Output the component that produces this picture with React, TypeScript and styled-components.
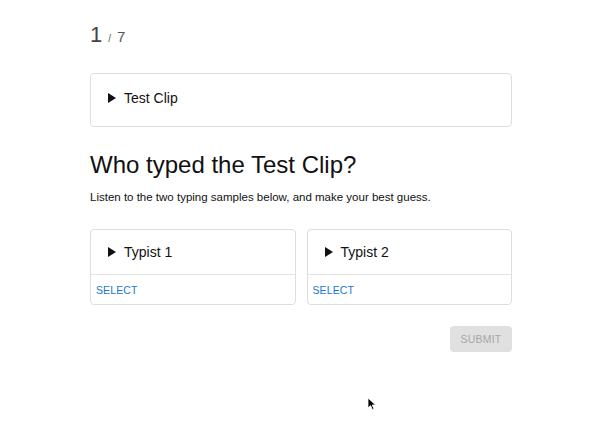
import styled, { createGlobalStyle } from "styled-components";

const GlobalStyle = createGlobalStyle`
  html, body {
    margin: 0;
    padding: 0;
    background: #ffffff;
  }
  body {
    font-family: "Liberation Sans", Arial, sans-serif;
    color: #111;
  }
`;

const Page = styled.div`
  position: relative;
  width: 600px;
  height: 448px;
  overflow: hidden;
`;

const Container = styled.div`
  width: 422px;
  margin-left: 90px;
  padding-top: 22px;
`;

const Counter = styled.div`
  display: flex;
  align-items: baseline;
  gap: 6px;
  color: #555;
  margin-bottom: 25px;
`;

const Current = styled.span`
  font-size: 22px;
  color: #444;
`;

const Slash = styled.span`
  font-size: 10px;
`;

const Total = styled.span`
  font-size: 15px;
`;

const Panel = styled.div`
  border: 1px solid #dedede;
  border-radius: 4px;
  background: #fff;
`;

const PlayRow = styled.div<{ height: number; lift?: number }>`
  display: flex;
  align-items: center;
  gap: 8px;
  box-sizing: border-box;
  height: ${({ height }) => height}px;
  padding: 0 0 ${({ lift = 0 }) => lift}px 17px;
  font-size: 14px;
  color: #111;
`;

const Triangle = styled.span`
  width: 0;
  height: 0;
  border-top: 5px solid transparent;
  border-bottom: 5px solid transparent;
  border-left: 8px solid #111;
`;

const Heading = styled.h1`
  font-size: 24px;
  font-weight: normal;
  margin: 24px 0 0;
  color: #111;
`;

const Intro = styled.p`
  font-size: 11.5px;
  margin: 12px 0 26px;
  color: #111;
`;

const Cards = styled.div`
  display: grid;
  grid-template-columns: 1fr 1fr;
  gap: 11px;
`;

const CardFooter = styled.div`
  border-top: 1px solid #e3e3e3;
  height: 29px;
  display: flex;
  align-items: center;
  padding-left: 5px;
`;

const SelectButton = styled.button`
  background: none;
  border: none;
  padding: 0;
  font-family: inherit;
  font-size: 10.5px;
  color: #1976d2;
  letter-spacing: 0.1px;
  cursor: pointer;
`;

const Actions = styled.div`
  display: flex;
  justify-content: flex-end;
  margin-top: 21px;
`;

const SubmitButton = styled.button`
  width: 62px;
  height: 26px;
  border: none;
  border-radius: 4px;
  background: #e0e0e0;
  color: #a6a6a6;
  font-family: inherit;
  font-size: 10.5px;
  letter-spacing: 0.2px;
`;

const Cursor = styled.svg`
  position: absolute;
  left: 367px;
  top: 397px;
`;

const typists = ["Typist 1", "Typist 2"];

export default function App() {
  return (
    <Page>
      <GlobalStyle />
      <Container>
        <Counter>
          <Current>1</Current>
          <Slash>/</Slash>
          <Total>7</Total>
        </Counter>
        <Panel>
          <PlayRow height={52} lift={5}>
            <Triangle />
            Test Clip
          </PlayRow>
        </Panel>
        <Heading>Who typed the Test Clip?</Heading>
        <Intro>Listen to the two typing samples below, and make your best guess.</Intro>
        <Cards>
          {typists.map((name) => (
            <Panel key={name}>
              <PlayRow height={44}>
                <Triangle />
                {name}
              </PlayRow>
              <CardFooter>
                <SelectButton>SELECT</SelectButton>
              </CardFooter>
            </Panel>
          ))}
        </Cards>
        <Actions>
          <SubmitButton disabled>SUBMIT</SubmitButton>
        </Actions>
      </Container>
      <Cursor width="10" height="14" viewBox="0 0 10 14">
        <path d="M1 1 L1 11 L3.5 8.6 L5.4 12.6 L7 11.9 L5.2 8 L8.6 8 Z" fill="#000" stroke="#fff" strokeWidth="0.8" />
      </Cursor>
    </Page>
  );
}
